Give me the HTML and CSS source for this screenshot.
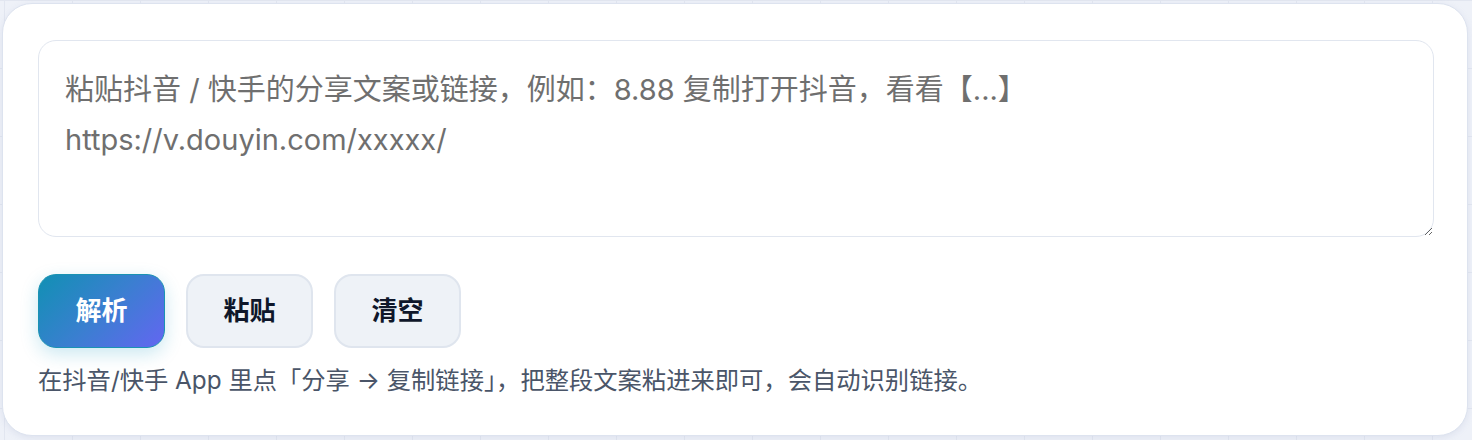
FILE: index.html
```html
<!DOCTYPE html>
<html lang="zh-CN">
<head>
<meta charset="utf-8">
<title>解析</title>
<link rel="stylesheet" href="styles.css">
</head>
<body>
<main class="card">
  <textarea class="input" placeholder="粘贴抖音 / 快手的分享文案或链接，例如：8.88 复制打开抖音，看看【...】&#10;https://v.douyin.com/xxxxx/"></textarea>
  <div class="actions">
    <button class="btn btn-primary" type="button">解析</button>
    <button class="btn btn-ghost" type="button">粘贴</button>
    <button class="btn btn-ghost" type="button">清空</button>
  </div>
  <p class="hint">在抖音/快手 App 里点「分享 → 复制链接」，把整段文案粘进来即可，会自动识别链接。</p>
</main>
</body>
</html>
```
FILE: styles.css
```css
* { box-sizing: border-box; }
html, body { height: 100%; }
body {
  margin: 0;
  padding: 3px 4px 4px 2px;
  background-color: #eef1f8;
  background-image:
    linear-gradient(to right, #e2e6f0 1px, transparent 1px),
    linear-gradient(to bottom, #e2e6f0 1px, transparent 1px);
  background-size: 68px 68px;
  background-position: 4px 0;
  font-family: Inter, "Noto Sans CJK SC", sans-serif;
}
.card {
  background: #ffffff;
  border: 1px solid #dde3ef;
  border-radius: 30px;
  padding: 36px 33px 37px 35px;
  box-shadow: 0 2px 6px rgba(148, 163, 200, 0.18);
}
.input {
  display: block;
  width: 100%;
  height: 197px;
  margin: 0;
  padding: 24px 26px;
  border: 1px solid #e1e6ef;
  border-radius: 18px;
  font-family: Inter, "Noto Sans CJK SC", sans-serif;
  font-size: 29px;
  line-height: 50px;
  color: #1f2937;
  background: #ffffff;
  resize: vertical;
  outline: none;
}
.input::placeholder { color: #6f6f6f; opacity: 1; }
.actions {
  display: flex;
  gap: 21px;
  margin-top: 37px;
}
.btn {
  width: 127px;
  height: 74px;
  border-radius: 18px;
  font-family: Inter, "Noto Sans CJK SC", sans-serif;
  font-size: 26px;
  font-weight: 700;
  cursor: pointer;
  padding: 0 0 5px;
}
.btn-primary {
  color: #ffffff;
  border: 1px solid #1a93b3;
  background: linear-gradient(135deg, #1190b4 0%, #3a7fd0 50%, #6366f1 100%);
  box-shadow: 0 6px 18px rgba(20, 150, 190, 0.22);
}
.btn-ghost {
  color: #0f172a;
  background: #eef2f7;
  border: 2px solid #dfe5ee;
}
.hint {
  margin: 14px 0 0;
  font-size: 24.3px;
  line-height: 36px;
  color: #4a5568;
}
```
